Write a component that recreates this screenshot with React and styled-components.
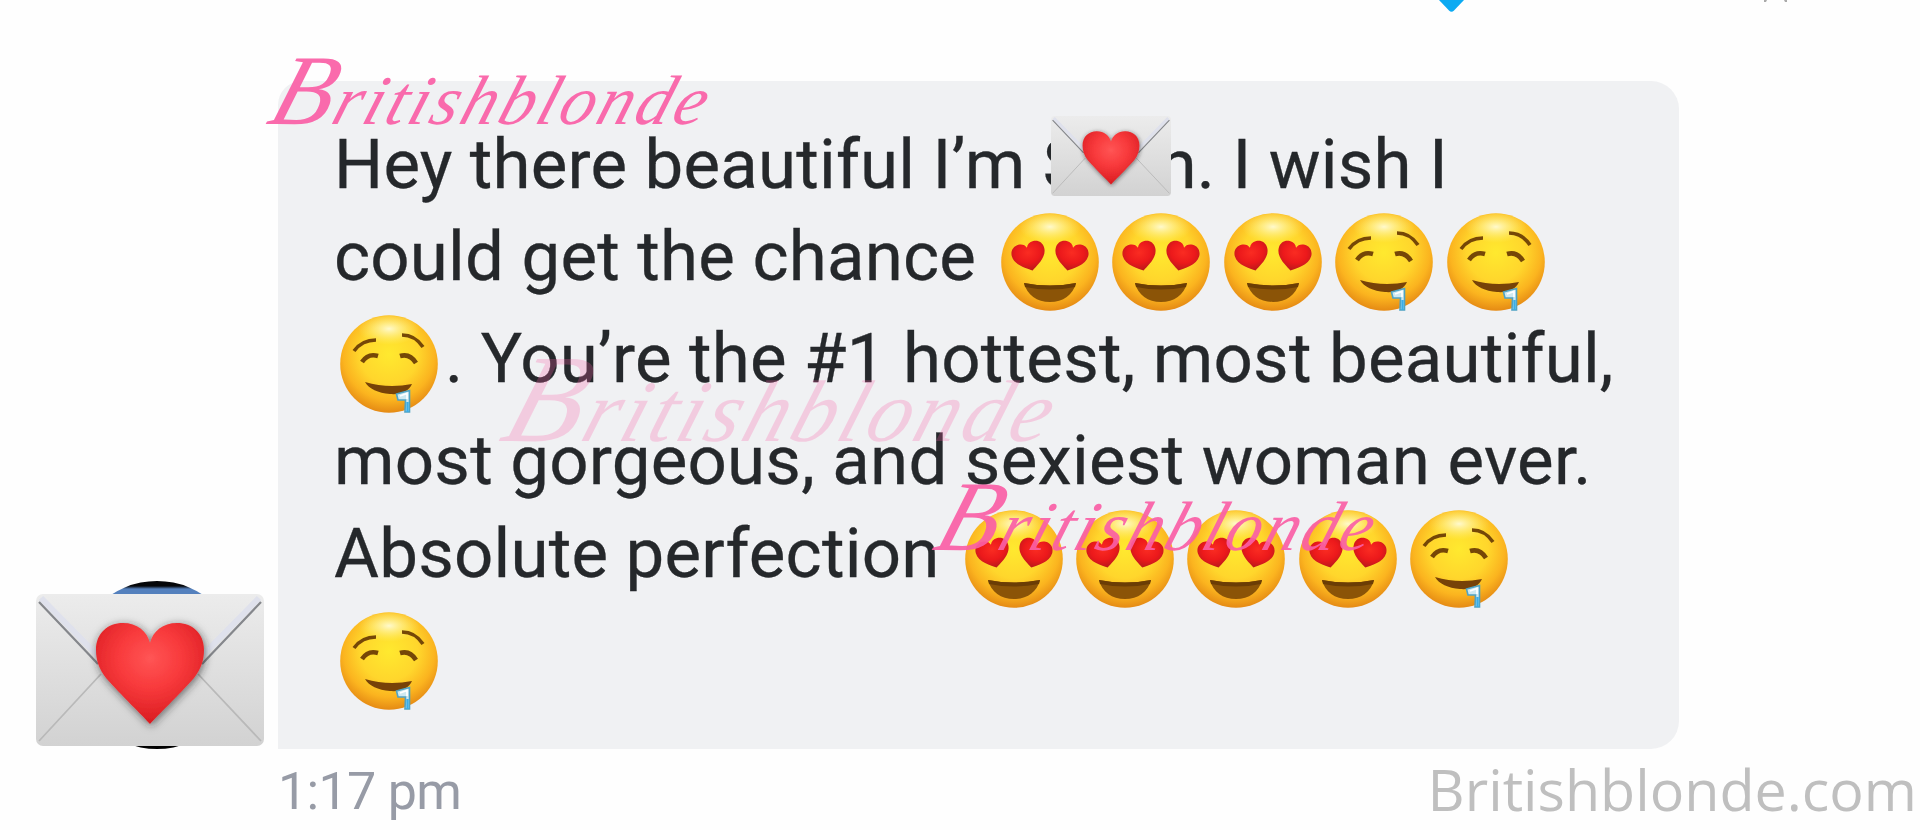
import React from "react";
import styled, { createGlobalStyle } from "styled-components";

const GlobalStyle = createGlobalStyle`
  * { box-sizing: border-box; }
  body { margin: 0; background: #fefefe; overflow: hidden; }
`;

const Page = styled.main`
  position: relative;
  display: flex;
  flex-direction: column;
  width: 1920px;
  height: 830px;
  overflow: hidden;
  background: #fefefe;
  font-family: Roboto, "Liberation Sans", sans-serif;
`;

const TopEdge = styled.header`
  display: flex;
  flex-shrink: 0;
  align-items: flex-start;
  gap: 299px;
  height: 81px;
  padding-left: 1438px;
  svg { display: block; }
`;

const Message = styled.section`
  display: flex;
  flex-shrink: 0;
  align-items: flex-end;
  height: 668px;
`;

const AvatarSlot = styled.div`
  display: grid;
  align-items: end;
  width: 278px;
  height: 168px;
  padding-left: 36px;
  > * { grid-area: 1 / 1; }
`;

const Avatar = styled.div`
  width: 168px;
  height: 168px;
  margin-left: 37px;
  border-radius: 50%;
  background: linear-gradient(#050609 0 5px, #5480bd 8px 90px, #000 150px);
`;

const Envelope = styled.svg`
  position: relative;
  display: block;
  width: ${(p) => p.$width}px;
  height: ${(p) => (p.$width * 2) / 3}px;
`;

const EnvelopeLift = styled.div`
  padding-bottom: 3px;
`;

const Bubble = styled.article`
  width: 1401px;
  height: 668px;
  padding: 46px 0 39px 58px;
  border-radius: 24px 28px 28px 0;
  background: #f0f1f3;
  color: #25282b;
`;

const Line = styled.div`
  display: flex;
  align-items: flex-end;
  height: ${(p) => p.$height}px;
`;

const Words = styled.span`
  padding-bottom: 20px;
  margin-left: ${(p) => p.$indent || 0}px;
  font-size: 69px;
  line-height: 69px;
  letter-spacing: ${(p) => p.$spacing}px;
  -webkit-text-stroke: 0.3px currentColor;
  white-space: pre;
`;

const NameCover = styled.span`
  display: block;
  align-self: flex-end;
  width: 120px;
  height: 80px;
  margin: 0 -12.5px 23px -33px;
  z-index: 1;
`;

const Faces = styled.span`
  display: flex;
  gap: 13.4px;
  margin-left: ${(p) => p.$indent}px;
`;

const FaceSvg = styled.svg`
  display: block;
  width: 98px;
  height: 98px;
  overflow: visible;
`;

const Footer = styled.footer`
  display: flex;
  justify-content: space-between;
  align-items: flex-start;
  padding: 1px 3px 0 278px;
`;

const Time = styled.time`
  padding-top: 12px;
  font-size: 52px;
  line-height: 60px;
  letter-spacing: -0.7px;
  color: #979ba6;
`;

const Site = styled.span`
  font: 57.4px/78px "Open Sans", "Noto Sans", sans-serif;
  color: #bfbfbf;
`;

const Signature = styled.span`
  position: absolute;
  left: ${(p) => p.$x}px;
  top: ${(p) => p.$y}px;
  font-family: "Liberation Serif", serif;
  font-style: italic;
  font-size: ${(p) => 70 * p.$scale}px;
  line-height: ${(p) => 100 * p.$scale}px;
  letter-spacing: ${(p) => 3 * p.$scale}px;
  color: #fa5fa6;
  opacity: ${(p) => p.$opacity};
  transform: skewX(-18deg);
  transform-origin: 0 75%;
  white-space: nowrap;
`;

const Initial = styled.span`
  font-size: 1.43em;
`;

const HEART = "M50 98C36 86 0 66 0 32C0 13 12 0 27 0C39 0 47 7 50 17C53 7 61 0 73 0C88 0 100 13 100 32C100 66 64 86 50 98Z";

function LoveLetter({ width, id }) {
  return (
    <Envelope $width={width} viewBox="0 0 228 152" role="img" aria-label="love letter">
      <defs>
        <linearGradient id={`${id}p`} x1="0" y1="0" x2="0" y2="1">
          <stop offset="0" stopColor="#ececec" />
          <stop offset=".5" stopColor="#dfdfdf" />
          <stop offset="1" stopColor="#d2d2d2" />
        </linearGradient>
        <radialGradient id={`${id}h`} cx=".5" cy=".35" r=".65">
          <stop offset="0" stopColor="#ff5555" />
          <stop offset=".45" stopColor="#f83a3c" />
          <stop offset="1" stopColor="#d91b20" />
        </radialGradient>
        <filter id={`${id}s`} x="-30%" y="-30%" width="160%" height="160%">
          <feDropShadow dx="1" dy="2" stdDeviation="4" floodColor="#222" floodOpacity=".65" />
        </filter>
        <filter id={`${id}b`}><feGaussianBlur stdDeviation=".7" /></filter>
      </defs>
      <rect width="228" height="152" rx="7" fill={`url(#${id}p)`} />
      <g fill="none" filter={`url(#${id}b)`}>
        <path d="M3 147L65 80M225 147L162 80" stroke="#b9b9b9" strokeWidth="1.8" />
        <path d="M5 4L66 66M223 4L162 66" stroke="#dfe1ec" strokeWidth="6" />
        <path d="M3 8L62 70M225 8L166 70" stroke="#85878c" strokeWidth="2.2" />
      </g>
      <path
        d="M114 130C108 123 84 100 70 84C63 75 60 66 60 56C60 39 72 29 87 29C101 29 111 37 114 49C117 37 127 29 141 29C156 29 168 39 168 56C168 66 165 75 158 84C144 100 120 123 114 130Z"
        fill={`url(#${id}h)`}
        filter={`url(#${id}s)`}
      />
    </Envelope>
  );
}

function FaceDefs() {
  return (
    <svg width="0" height="0" style={{ position: "absolute" }} aria-hidden="true">
      <defs>
        <radialGradient id="skin" cx=".5" cy=".4" r=".6">
          <stop offset="0" stopColor="#ffe92f" />
          <stop offset=".5" stopColor="#ffd62c" />
          <stop offset=".78" stopColor="#fbb41f" />
          <stop offset="1" stopColor="#e58a14" />
        </radialGradient>
        <radialGradient id="shine" cx=".5" cy=".4" r=".5">
          <stop offset="0" stopColor="#fffbd5" stopOpacity=".95" />
          <stop offset="1" stopColor="#fff27a" stopOpacity="0" />
        </radialGradient>
        <radialGradient id="eye" cx=".5" cy=".35" r=".6">
          <stop offset="0" stopColor="#fa2c22" />
          <stop offset=".6" stopColor="#ec191b" />
          <stop offset="1" stopColor="#c0191b" />
        </radialGradient>
      </defs>
    </svg>
  );
}

function Face({ kind }) {
  return (
    <FaceSvg viewBox="0 0 98 98" role="img" aria-label={kind}>
      <circle cx="49" cy="49" r="48.8" fill="url(#skin)" />
      <ellipse cx="49" cy="17" rx="31" ry="16" fill="url(#shine)" />
      {kind === "love" ? (
        <g>
          <path d="M23 70Q49 75 75 70C72 82 62 89 49 89C36 89 26 82 23 70Z" fill="#8b5407" />
          <path d="M23 70Q49 75 75 70L74 74Q49 79 24 74Z" fill="#6b3d05" />
          <g fill="url(#eye)">
            <path d={HEART} transform="translate(8.5 34) rotate(-14) scale(.335 .29)" />
            <path d={HEART} transform="translate(57 25.9) rotate(14) scale(.335 .29)" />
          </g>
        </g>
      ) : (
        <g>
          <g fill="none" stroke="#754707" strokeWidth="3.6">
            <path d="M14 36Q22 25 36 25" />
            <path d="M62 20Q75 20 83 32" />
            <path d="M22 47Q28 38 38 41" strokeWidth="4.6" />
            <path d="M60 41Q70 38 76 48" strokeWidth="4.6" />
          </g>
          <path d="M25 67Q48 74 72 69C69 76 61 80 50 79C38 78 29 74 25 67Z" fill="#774208" />
          <path d="M56.5 79L69.5 75.5V97H65L65.5 85H58Z" fill="#cfe9f0" stroke="#4fa3c4" strokeWidth="1.6" />
          <path d="M60 81L67 78.5V84" fill="none" stroke="#fff" strokeWidth="1.6" />
          <path d="M67.5 87V97" stroke="#3aaee8" strokeWidth="2.4" />
        </g>
      )}
    </FaceSvg>
  );
}

function FaceRun({ kinds, indent = 0 }) {
  return (
    <Faces $indent={indent}>
      {kinds.map((kind, i) => <Face key={i} kind={kind} />)}
    </Faces>
  );
}

function Sign({ x, y, scale = 1, opacity = 0.92 }) {
  return (
    <Signature $x={x} $y={y} $scale={scale} $opacity={opacity}>
      <Initial>B</Initial>ritishblonde
    </Signature>
  );
}

export default function App() {
  return (
    <Page>
      <GlobalStyle />
      <FaceDefs />
      <TopEdge>
        <svg width="27" height="12" viewBox="0 0 27 12"><path d="M1 0H26L16 10.5Q13.5 13 11 10.5Z" fill="#0caaf2" /></svg>
        <svg width="24" height="3" viewBox="0 0 24 3"><path d="M0 0H3L2 2H0ZM20 0H23V2H21Z" fill="#aaa" /></svg>
      </TopEdge>
      <Message>
        <AvatarSlot>
          <Avatar />
          <EnvelopeLift><LoveLetter width={228} id="large" /></EnvelopeLift>
        </AvatarSlot>
        <Bubble>
          <Line $height={92}>
            <Words $spacing={0.18} $indent={-2}>Hey there beautiful I’m S</Words>
            <NameCover><LoveLetter width={120} id="small" /></NameCover>
            <Words $spacing={0.2}>n. I wish I</Words>
          </Line>
          <Line $height={92}>
            <Words $spacing={0.2} $indent={-2}>could get the chance</Words>
            <FaceRun indent={25} kinds={["love", "love", "love", "drool", "drool"]} />
          </Line>
          <Line $height={102}>
            <FaceRun indent={4} kinds={["drool"]} />
            <Words $spacing={0.2} $indent={7}>. You’re the #1 hottest, most beautiful,</Words>
          </Line>
          <Line $height={102}>
            <Words $spacing={0.22} $indent={-2}>most gorgeous, and sexiest woman ever.</Words>
          </Line>
          <Line $height={93}>
            <Words $spacing={0.2} $indent={-2}>Absolute perfection</Words>
            <FaceRun indent={25} kinds={["love", "love", "love", "love", "drool"]} />
          </Line>
          <Line $height={102}>
            <FaceRun indent={4} kinds={["drool"]} />
          </Line>
        </Bubble>
      </Message>
      <Footer>
        <Time>1:17 pm</Time>
        <Site>Britishblonde.com</Site>
      </Footer>
      <Sign x={265} y={41} />
      <Sign x={498} y={336} scale={1.253} opacity={0.25} />
      <Sign x={931} y={467} />
    </Page>
  );
}
